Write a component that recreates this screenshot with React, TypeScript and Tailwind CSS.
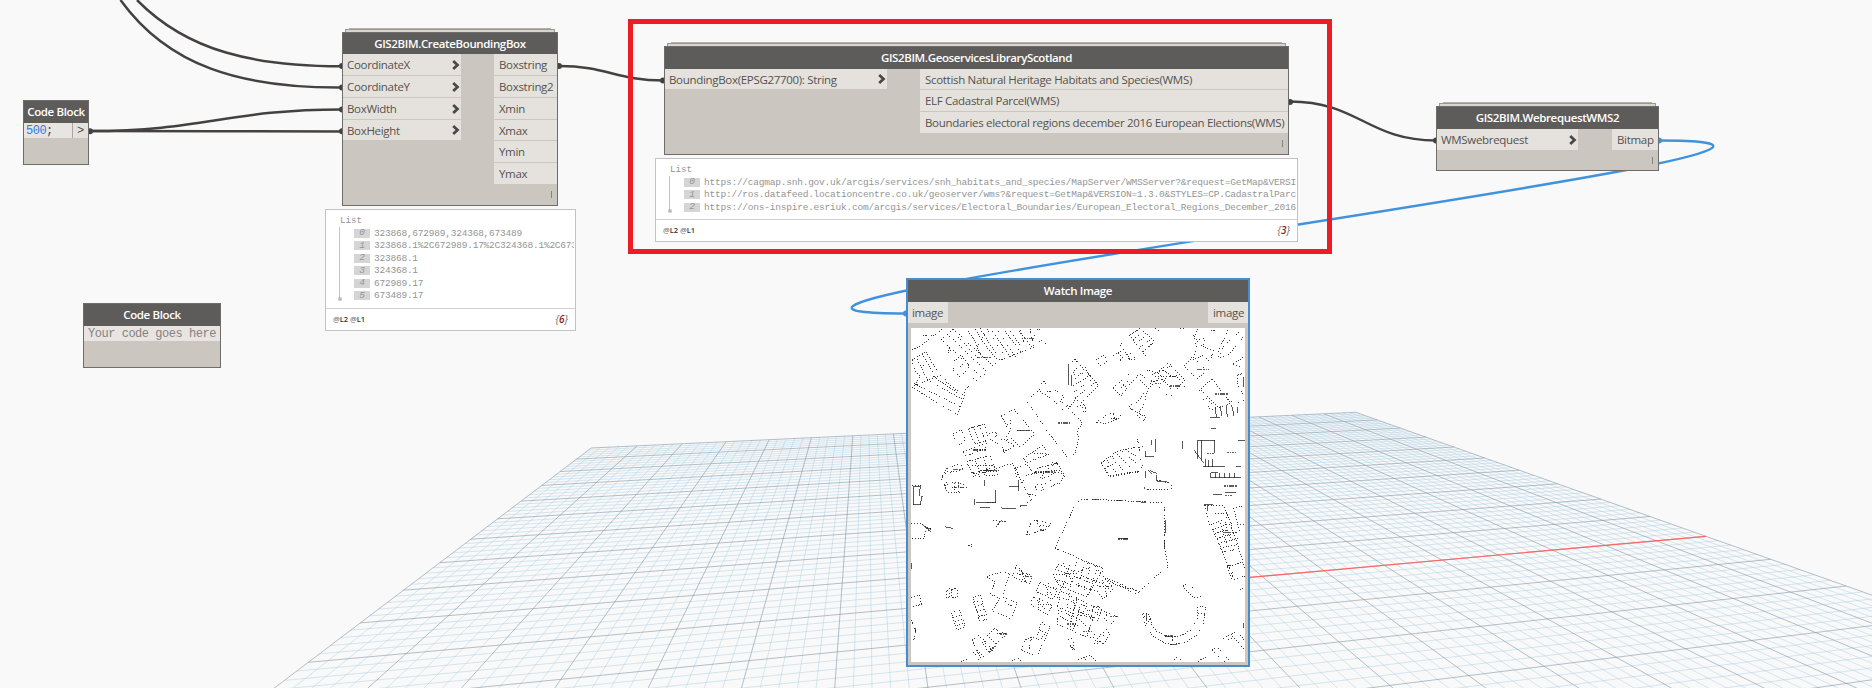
import React from "react";

const SANS = "font-['Open_Sans',sans-serif]";
const MONO = "font-['Liberation_Mono',monospace]";

/* ---------- perspective ground grid ---------- */

function project(i: number, j: number) {
  const w = 1 + 0.01068 * i - 0.05064 * j;
  return {
    x: (591.2 + 52.71 * i - 43.9 * j) / w,
    y: (448 + 2.62 * i - 12.11 * j) / w,
  };
}

function segment(i0: number, j0: number, i1: number, j1: number) {
  const a = project(i0, j0);
  const b = project(i1, j1);
  return `M${a.x.toFixed(1)} ${a.y.toFixed(1)}L${b.x.toFixed(1)} ${b.y.toFixed(1)}`;
}

function gridPaths() {
  let minor = "";
  let major = "";
  for (let k = 0; k <= 100; k++) {
    const s = segment(k / 5, 0, k / 5, 18);
    if (k % 5 === 0) major += s;
    else minor += s;
  }
  for (let k = 0; k <= 88; k++) {
    const s = segment(0, k / 5, 20, k / 5);
    if (k % 5 === 0) major += s;
    else minor += s;
  }
  return { minor, major };
}

function Ground() {
  const { minor, major } = gridPaths();
  return (
    <svg className="absolute inset-0" width="1872" height="688" fill="none">
      <path d={minor} stroke="#a9cfe3" strokeOpacity="0.47" strokeWidth="1" />
      <path d={major} stroke="#7f95a3" strokeOpacity="0.58" strokeWidth="1" />
      <path d={segment(10, 10, 20, 10)} stroke="#ff6464" strokeWidth="1.2" />
    </svg>
  );
}

/* ---------- connectors ---------- */

function wire(x0: number, y0: number, x1: number, y1: number) {
  const d = 0.45 * Math.hypot(x1 - x0, y1 - y0);
  return `M${x0} ${y0}C${x0 + d} ${y0} ${x1 - d} ${y1} ${x1} ${y1}`;
}

function Wires() {
  const dark: [number, number][] = [
    [90, 131.3], [342, 66], [342, 87.5], [342, 109.5], [342, 131.3],
    [559, 66], [663, 80.5], [1290, 102], [1436, 140.5],
  ];
  return (
    <svg className="absolute inset-0" width="1872" height="688" fill="none">
      <g stroke="#444241" strokeWidth="2.5">
        <path d="M137 0C188 52 255 66 342 66.3" />
        <path d="M120.5 0C168 66 240 88 342 87.5" />
        <path d={wire(90, 131, 342, 109.5)} />
        <path d={wire(90, 131, 342, 131.5)} />
        <path d={wire(559, 66, 664, 80.5)} />
        <path d={wire(1290, 101.5, 1436, 140.5)} />
      </g>
      <path d={wire(1659, 140.5, 906, 313.5)} stroke="#3f92dd" strokeWidth="2.4" />
      {dark.map(([x, y]) => (
        <circle key={`${x}-${y}`} cx={x} cy={y} r="3" fill="#444241" />
      ))}
      <circle cx="1659" cy="140.5" r="3" fill="#3f92dd" />
      <circle cx="906" cy="313.5" r="3" fill="#3f92dd" />
    </svg>
  );
}

/* ---------- node parts ---------- */

function Header({ children, size }: { children: string; size: string }) {
  return (
    <div className={`flex shrink-0 items-center justify-center whitespace-nowrap bg-[#5e5c5a] text-[11.5px] font-semibold tracking-[-0.36px] text-white ${SANS} ${size}`}>
      {children}
    </div>
  );
}

function Chevron() {
  return (
    <svg className="ml-auto mr-px shrink-0" width="8" height="10" viewBox="0 0 8 10" fill="none">
      <path d="M1.2 1L5.5 5L1.2 9" stroke="#4a4846" strokeWidth="2.7" />
    </svg>
  );
}

function Port({ label, input, short, pad = "pl-1" }: { label: string; input?: boolean; short?: boolean; pad?: string }) {
  return (
    <div className={`flex items-center whitespace-nowrap bg-[#e5e2dd] text-[11.5px] leading-none tracking-[-0.31px] text-[#545250] ${SANS} ${short ? "h-5" : "h-[21px]"} ${pad}`}>
      <span className={short ? "pt-[1.5px]" : ""}>{label}</span>
      {input && <Chevron />}
    </div>
  );
}

function StackEdges() {
  return (
    <>
      <div className="mx-[7px] h-px bg-[#b5b2ad]" />
      <div className="mx-[3px] h-[3px] border-x border-t border-[#9b9892] bg-[#d9d6cf]" />
    </>
  );
}

function Lacing() {
  return <div className="h-[7px] w-px bg-[#85837f]" />;
}

function Preview({ frame, rows, count, height }: { frame: string; rows: string[]; count: string; height: string }) {
  return (
    <div className={`absolute flex flex-col border border-[#c3c3c3] bg-white ${MONO} ${frame}`}>
      <div className={`relative overflow-hidden pt-[5px] pr-px text-[#959595] ${height}`}>
        <div className="pl-[14px] text-[9.2px] leading-3">List</div>
        <div className="ml-[13px] flex">
          <div className="relative mb-[3px] w-px shrink-0 bg-[#c3c3c3]">
            <div className="absolute -bottom-[2px] -left-[1.5px] h-1 w-1 rounded-full bg-[#bdbdbd]" />
          </div>
          <div className="ml-[14px] min-w-0 flex-1">
            {rows.map((r, i) => (
              <div key={r} className="flex h-[12.5px] items-center overflow-hidden whitespace-pre text-[9.5px] leading-3 tracking-[-0.22px]">
                <span className="flex h-[9px] w-4 shrink-0 items-center justify-center bg-[#d5d5d5] italic">{i}</span>
                <span className="pl-1 pt-px">{r}</span>
              </div>
            ))}
          </div>
        </div>
      </div>
      <div className="flex flex-1 items-center justify-between border-t border-[#d2d2d2] px-[7px] font-['Open_Sans',sans-serif] text-[7.5px]">
        <span className="font-semibold text-[#333]"><span className="text-[#777]">@</span>L2 <span className="text-[#777]">@</span>L1</span>
        <span className="text-[10px] italic text-[#666]">{"{"}<b className="font-semibold text-[#8b1a1a]">{count}</b>{"}"}</span>
      </div>
    </div>
  );
}

/* ---------- cadastral map drawing ---------- */

const upperDashed = [
  // north-west parcels
  "M216 270L245 255L282 226L305 208M248 227H276M216 300L224 330L240 350L222 382M232 298L262 360M246 282L285 350M258 276L300 348M216 300L258 276M240 318L262 312M222 378L300 346L316 350L320 368L375 408",
  "M216 382L352 464L372 408M222 370L362 440M262 358L370 420M280 350L352 398M372 398L384 378L390 384",
  "M304 238L340 206M304 238L425 352M322 222L440 335M340 208L460 318M355 232L420 300M378 206L400 235L425 290M304 238L335 275M324 280L330 262M335 310L365 285L388 320L360 352L338 330L350 312M360 320L380 305",
  "M405 208L440 262L470 296M420 205L480 300M412 262L436 220M440 206L500 298M452 206L514 294M470 206L526 290M490 206L545 280M505 206L545 262M530 206L575 260M540 210L552 246M570 206L582 262L480 300M400 355L410 362M425 352L478 300",
  "M590 206L604 212M575 218L585 230M596 246L610 240L618 254",
  // centre triangle parcel
  "M600 388L560 422L625 518L686 596L705 580L716 540L712 510L728 490L690 448L660 425M604 372L612 364L618 372M600 395L625 410L650 430L670 450M620 395L650 392L672 410L660 425L690 440L705 420",
  "M705 298L690 310M705 298L776 376M705 298L718 312L698 340L712 350L740 320M698 360L742 330M700 378L752 345M702 396L760 355M706 414L768 366M724 428L776 376M706 414L740 460M712 440L732 432L740 450L726 458M740 330L752 355",
  "M768 300L790 286L804 302L782 318ZM768 488L800 465L832 456L845 470L800 490ZM812 474L836 480M820 462L828 484",
  // north-centre
  "M820 286L850 268L838 254L852 238M835 280L848 292L838 300L860 316M850 268L865 290L875 310M870 225L900 206M868 226L920 292M880 218L902 206L946 246L920 262M880 238L900 222M890 250L915 228M900 262L930 240M910 276L936 252M862 285L880 278L885 300L865 296M946 206L960 214L974 206M1020 206H1036",
  "M820 384L868 340L884 356L842 408ZM836 390L868 360M850 372L860 384M866 440L900 420L920 380L888 350L900 342L925 362M866 440L912 484L918 468L895 458L910 440L920 400L935 360",
  "M920 330L950 340L985 308L1034 360L990 412L935 360M935 345L990 320M942 365L1008 346L1034 380M955 340L1005 400M945 350L1020 350M970 330L1010 360M930 380L960 350L975 372M870 444L908 466",
  // north-east
  "M1060 225L1070 260L1060 300L1090 285L1108 305L1122 272L1094 262L1068 238M1072 245L1086 230L1098 250L1082 258M1075 206L1062 230M1112 210L1136 214M1136 290L1150 260L1200 214M1140 292L1165 285L1212 228M1135 275L1165 208M1032 318L1058 290L1100 334L1072 356Z",
  "M1180 312L1212 290M1180 312L1204 320M1116 356L1082 388L1138 444L1172 430ZM1072 400L1082 388M1090 420L1100 414L1130 446L1112 448ZM1194 345L1212 338M1194 345V376L1212 408M1165 418L1190 432L1212 420",
  // west-centre
  "M340 520L366 510L376 540L360 556L346 544ZM386 506L404 552M400 500L420 550M416 496L440 552M434 492L446 536L476 552M386 506L434 492M404 552L440 540M448 520L470 516L466 540",
  "M484 468L522 448L584 522L540 562L510 530M484 468L500 500L510 480L514 500L496 540L524 558L480 580M484 540L510 536M532 512H570M488 560L494 584M370 574L432 552L440 566L376 588ZM402 570H440",
  "M380 605L450 586L464 622L395 640ZM396 618H460M405 602L420 636M430 592L442 630M398 650L490 618L520 610L530 650M400 640L480 632M550 595L608 556L626 582L560 608ZM582 580H622M524 625L560 612L575 634L612 640L650 606L676 655M575 640L660 630M590 625L650 610M640 606L600 655M305 655L318 626L362 610L368 630L312 640",
  // east-centre
  "M784 608L830 575L866 566L910 560M784 608L806 648L850 640L896 636L912 608M800 600L830 640M815 588L850 632M826 576L870 620M840 570L890 610M858 568L905 600M892 536L900 580M795 625L830 606M526 620L540 655",
];

const upperSolid = [
  "M686 312V375M695 346V378M916 590H942M916 572V590M948 538V575M934 540V555M1028 542V566M1074 541H1124V580M1074 541V598M1085 541V600M1062 570L1090 608M1090 620H1156M1098 596V620M1106 600V620M1118 598V620M1188 620H1204M1194 541H1214M1112 505H1128M916 632V655M930 632L950 640M1125 445L1130 472M1140 438L1146 468M1158 436L1162 470M1175 436L1182 468M1194 442V460M1110 474H1140M1212 350V380",
];

// place-name marks, too small to read
const upperMarks = [
  "M1125 402H1164M990 378H1022M654 489H690M400 570H438M552 235H586M1072 328H1108M945 370H962M584 636H648M430 632H455M340 628H370M414 292H456M1100 580H1126M1160 578H1192M535 512H565",
];

const lowerDashed = [
  "M305 30L312 8L330 0M312 45L322 66L360 68M312 45L350 36L380 48M345 40V65M355 38V66M335 52H380M395 5L420 20M420 0L440 18L480 14M530 5L545 40L575 90L540 110M545 40L560 15L590 10M585 50L600 38L612 58L596 66ZM605 28L622 18L640 48L628 52ZM625 20L650 5L674 12L660 40L640 44M560 70L590 78",
  "M796 0L810 20L846 14L896 4M950 30L994 40V60L914 58M216 48L244 45M320 36L312 60",
  "M560 195L575 155L590 150L632 160L620 178ZM590 152L600 175M600 165L630 170M460 152L500 155M470 170L490 148M385 226L396 222V230ZM214 160L245 162L275 178L255 185V205H216",
  // large east parcel
  "M645 235L705 105L720 90L760 88L965 98L975 110V240L984 292L940 325L892 372L830 345L790 325M645 235L790 295M830 345L890 362M800 325L880 358",
  // dense blocks
  "M655 282L640 315L655 345L740 380L790 298L720 270M670 280L700 340L770 365M655 282L730 320L790 340M640 315L700 310L760 290M690 285L670 345M710 276L690 350M730 290L712 360M750 300L730 366M770 300L745 375M655 300L780 350M650 330L700 345M775 300L800 330L820 355L790 388L770 360M785 330L810 360M780 350H815M795 345L800 380",
  "M600 338L588 364L640 388L650 360ZM615 345L640 380M625 340L622 375M640 352L740 400L830 440L815 460L760 425M660 380L650 410L700 430L770 445M655 420L720 450L770 500L745 504L652 462ZM670 385L705 400L690 470M700 392L740 410L720 440M660 440L720 470M690 415L760 440L740 500M720 410L700 480M740 420L770 430L780 410L760 405M665 350L650 390M690 370L680 420M710 380L700 440M760 410L750 455M785 420L770 455M800 425V455",
  "M580 382L570 402L625 436L636 404ZM590 390L625 430M600 385L595 415M600 405H632M530 285L516 318L568 342L576 318L535 300L550 285M545 300L560 340M530 310L565 320M552 310L545 335M440 320L490 304L510 312L486 380L532 400L512 446L456 422L480 385L450 372L466 335L440 320M500 385L495 400L520 408",
  "M320 362L330 356V384H320ZM336 358L352 352V382H336ZM334 430L358 420L376 470L352 480ZM340 442L362 435M346 456L366 448M350 468L370 460M398 382L420 374L442 446L420 456ZM402 396L424 390M406 410L428 404M412 424L434 418M416 440L438 434M214 382L238 376L245 402L216 412",
  "M396 510L415 495L460 545M396 510L410 540L430 560M462 476L500 492L445 545L426 515ZM440 495L470 525M430 508L455 538M470 492H500M400 545L415 570M410 540L425 570M362 574L380 568M545 540L555 510L575 500L600 510L632 470L604 458L590 500M545 540L590 560L632 470M575 500L565 545M600 480L615 490M685 508L700 506V540L690 525L704 538M760 520L785 490L800 478L808 495L792 520ZM790 486V505M770 515H792M715 570L750 556L770 574M730 562L745 574M516 574L530 562L545 574",
  // crescent
  "M908 432L918 470L940 500L975 520L1000 524L1040 515L1070 495L1090 465L1096 410H1074L1072 450L1050 482L1020 498L985 500L950 485L935 462L925 430H908M1028 348L1042 340L1058 352L1044 366ZM1044 366L1066 386M1072 384L1084 380M912 440L930 450M920 462L934 440M975 500H1000M998 500V524M1074 430H1096M940 485L925 500",
  "M1092 105L1110 165L1130 205L1150 250L1175 332L1214 318M1095 105L1150 108L1165 140M1112 165L1168 140M1118 178L1175 160M1124 190L1180 175M1130 205L1190 188M1135 220L1195 205M1140 235L1198 222M1145 248L1200 235M1125 130H1160M1165 140L1185 200L1205 260L1214 300M1160 290L1204 278M1168 310L1185 305M1165 285L1180 325M1180 115L1200 185M1180 115L1210 108M1200 165L1214 160M1140 160L1160 220M1155 155L1175 215M1002 570L1012 560L1022 570M1074 574L1100 560M1116 540L1132 530L1166 570L1150 574ZM1150 505L1172 492L1214 540M1176 492L1190 482L1214 512M1200 360L1214 350M1165 510L1185 500M214 450L226 480L220 520",
];

const lowerSolid = [
  "M220 50V104H242L244 80L250 78M220 50H242L238 62V78M245 162L272 184M258 176H274M314 170L338 175M405 86V104M408 98H468V60M420 112L450 112M484 114L528 116M540 108L560 106M536 30V62M508 50H536M434 30V48M428 0H470M925 0L935 12M950 15V32M914 50V58M950 34H980M834 207H864M1112 8V24M1126 8V24M1140 8V24M1155 8V24M1168 10V24M1185 10V24M1112 8H1135M1112 24H1204M1120 74H1145M1155 68H1188M1092 105H1120M1102 104V124M760 88L775 90M828 91L850 93M890 95L918 97M976 150V190M974 210V235M215 280V298M990 524L1010 524M1212 460V475M920 430V452M470 166L485 152M226 475V490",
];

const lowerMarks = [
  "M834 207H864M1150 188H1182M680 462H710M728 484H760M446 548L470 525M975 498H1000M555 320H575M600 180H612M1152 48H1190M1154 76H1180M440 98H468M345 52H370M480 492H500M810 440H835",
];

function MapLayer({ offset, dashed, solid, marks }: { offset: string; dashed: string[]; solid: string[]; marks: string[] }) {
  return (
    <g transform={`translate(${offset}) scale(0.33333)`} stroke="#181818" strokeWidth="2.6">
      <path d={dashed.join("")} strokeDasharray="3 5 4 6 2 5" />
      <path d={solid.join("")} strokeWidth="2.4" strokeOpacity="0.9" />
      <path d={marks.join("")} strokeWidth="4" strokeOpacity="0.7" strokeDasharray="7 2 4 3" />
    </g>
  );
}

function MapDrawing() {
  return (
    <svg className="block bg-white" width="334" height="334" viewBox="0 0 334 334" fill="none" shapeRendering="crispEdges">
      <MapLayer offset="-71 -68" dashed={upperDashed} solid={upperSolid} marks={upperMarks} />
      <MapLayer offset="-71 142" dashed={lowerDashed} solid={lowerSolid} marks={lowerMarks} />
    </svg>
  );
}

/* ---------- nodes ---------- */

const body = "flex flex-col border border-[#6f6d6a] bg-[#cbc6bf]";

export default function App() {
  return (
    <div className="relative h-[688px] w-[1872px] overflow-hidden bg-[#f9f9f9]">
      <Ground />
      <Wires />

      <div className={`absolute left-[23px] top-[100px] h-[65px] w-[66px] ${body}`}>
        <Header size="h-[22px]">Code Block</Header>
        <div className={`flex h-[15px] text-[12px] leading-[16px] tracking-[-0.5px] ${MONO}`}>
          <div className="flex-1 bg-[#e8e4e1] pl-[2px] text-[#444]"><span className="text-[#2e7de0]">500</span>;</div>
          <div className="w-4 border-l border-[#a9a6a1] bg-[#e5e2dd] pl-1 text-[#545250]">&gt;</div>
        </div>
      </div>

      <div className={`absolute left-[83px] top-[303px] h-[65px] w-[138px] ${body}`}>
        <Header size="h-[22px]">Code Block</Header>
        <div className={`h-[15px] whitespace-pre bg-[#e8e4e1] pl-1 text-[12px] leading-[16px] tracking-[-0.47px] text-[#85827f] ${MONO}`}>Your code goes here</div>
      </div>

      <div className="absolute left-[342px] top-[28px] w-[216px]">
        <StackEdges />
        <div className={`h-[174px] ${body}`}>
          <Header size="h-[21px]">GIS2BIM.CreateBoundingBox</Header>
          <div className="flex items-start justify-between">
            <div className="flex w-[118px] flex-col gap-px">
              <Port label="CoordinateX" input />
              <Port label="CoordinateY" input />
              <Port label="BoxWidth" input />
              <Port label="BoxHeight" input short />
            </div>
            <div className="flex w-[63px] flex-col gap-px">
              <Port label="Boxstring" pad="pl-[5px]" />
              <Port label="Boxstring2" pad="pl-[5px]" />
              <Port label="Xmin" pad="pl-[5px]" />
              <Port label="Xmax" short pad="pl-[5px]" />
              <Port label="Ymin" pad="pl-[5px]" />
              <Port label="Ymax" pad="pl-[5px]" />
            </div>
          </div>
          <div className="flex flex-1 items-center justify-end pr-[5px]"><Lacing /></div>
        </div>
      </div>

      <Preview
        frame="left-[325px] top-[209px] h-[122px] w-[251px]"
        height="h-[98px]"
        count="6"
        rows={["323868,672989,324368,673489", "323868.1%2C672989.17%2C324368.1%2C673489.17", "323868.1", "324368.1", "672989.17", "673489.17"]}
      />

      <div className="absolute left-[664px] top-[42px] w-[625px]">
        <StackEdges />
        <div className={`h-[109px] ${body}`}>
          <Header size="h-[22px]">GIS2BIM.GeoservicesLibraryScotland</Header>
          <div className="flex items-start justify-between">
            <div className="w-[222px]">
              <Port label="BoundingBox(EPSG27700): String" input short />
            </div>
            <div className="flex w-[368px] flex-col gap-px">
              <Port label="Scottish Natural Heritage Habitats and Species(WMS)" short pad="pl-[5px]" />
              <Port label="ELF Cadastral Parcel(WMS)" pad="pl-[5px]" />
              <Port label="Boundaries electoral regions december 2016 European Elections(WMS)" pad="pl-[5px]" />
            </div>
          </div>
          <div className="flex flex-1 items-center justify-end pr-[5px]"><Lacing /></div>
        </div>
      </div>

      <Preview
        frame="left-[655px] top-[158px] h-[84px] w-[643px]"
        height="h-[60px]"
        count="3"
        rows={[
          "https://cagmap.snh.gov.uk/arcgis/services/snh_habitats_and_species/MapServer/WMSServer?&request=GetMap&VERSION=1.3.0",
          "http://ros.datafeed.locationcentre.co.uk/geoserver/wms?&request=GetMap&VERSION=1.3.0&STYLES=CP.CadastralParcel",
          "https://ons-inspire.esriuk.com/arcgis/services/Electoral_Boundaries/European_Electoral_Regions_December_2016",
        ]}
      />

      <div className="absolute left-[1436px] top-[102px] w-[223px]">
        <StackEdges />
        <div className={`h-[65px] ${body}`}>
          <Header size="h-[22px]">GIS2BIM.WebrequestWMS2</Header>
          <div className="flex items-start justify-between">
            <div className="w-[141px]"><Port label="WMSwebrequest" input /></div>
            <div className="w-[46px]"><Port label="Bitmap" pad="pl-[5px]" /></div>
          </div>
          <div className="flex flex-1 items-center justify-end pr-[5px]"><Lacing /></div>
        </div>
      </div>

      <div className="absolute left-[906px] top-[278px] flex h-[389px] w-[344px] flex-col border-2 border-[#458dce] bg-[#cbc6bf]">
        <Header size="h-[22px]">Watch Image</Header>
        <div className="flex justify-between">
          <div className="w-10"><Port label="image" /></div>
          <div className="w-10"><Port label="image" pad="pl-[5px]" /></div>
        </div>
        <div className="px-[3px] pt-[5px]">
          <MapDrawing />
        </div>
      </div>

      <div className="absolute left-[628px] top-[19px] h-[235px] w-[704px] border-5 border-[#ee1c24]" />
    </div>
  );
}
